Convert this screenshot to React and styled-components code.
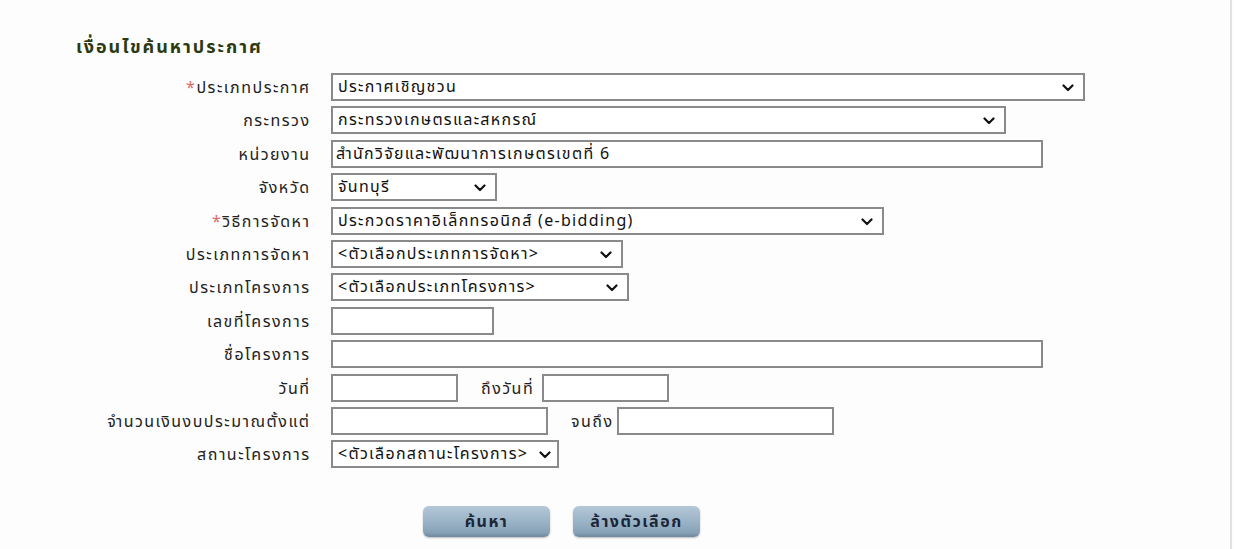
import React from "react";
import styled, { createGlobalStyle } from "styled-components";

const FONT = `Tahoma, "Noto Sans Thai", "Noto Sans", "DejaVu Sans", sans-serif`;

const GlobalStyle = createGlobalStyle`
  html, body {
    margin: 0;
    padding: 0;
    background: #fdfdfd;
  }
  body {
    font-family: ${FONT};
  }
`;

function App() {
  return (
    <>
      <GlobalStyle />
      <Page>
        <Title>เงื่อนไขค้นหาประกาศ</Title>
        <Form>
          <Label>
            <Star>*</Star>ประเภทประกาศ
          </Label>
          <Field>
            <Select width={754} value="ประกาศเชิญชวน" />
          </Field>

          <Label>กระทรวง</Label>
          <Field>
            <Select width={675} value="กระทรวงเกษตรและสหกรณ์" />
          </Field>

          <Label>หน่วยงาน</Label>
          <Field>
            <Input width={712} defaultValue="สำนักวิจัยและพัฒนาการเกษตรเขตที่ 6" />
          </Field>

          <Label>จังหวัด</Label>
          <Field>
            <Select width={166} value="จันทบุรี" />
          </Field>

          <Label>
            <Star>*</Star>วิธีการจัดหา
          </Label>
          <Field>
            <Select width={553} value="ประกวดราคาอิเล็กทรอนิกส์ (e-bidding)" />
          </Field>

          <Label>ประเภทการจัดหา</Label>
          <Field>
            <Select width={292} value="<ตัวเลือกประเภทการจัดหา>" />
          </Field>

          <Label>ประเภทโครงการ</Label>
          <Field>
            <Select width={298} value="<ตัวเลือกประเภทโครงการ>" />
          </Field>

          <Label>เลขที่โครงการ</Label>
          <Field>
            <Input width={163} />
          </Field>

          <Label>ชื่อโครงการ</Label>
          <Field>
            <Input width={712} />
          </Field>

          <Label>วันที่</Label>
          <Field>
            <Input width={127} />
            <InlineLabel $before={23} $after={8}>ถึงวันที่</InlineLabel>
            <Input width={127} />
          </Field>

          <Label>จำนวนเงินงบประมาณตั้งแต่</Label>
          <Field>
            <Input width={217} />
            <InlineLabel $before={23} $after={3}>จนถึง</InlineLabel>
            <Input width={217} />
          </Field>

          <Label>สถานะโครงการ</Label>
          <Field>
            <Select width={228} value="<ตัวเลือกสถานะโครงการ>" narrow />
          </Field>
        </Form>
        <Buttons>
          <Button>ค้นหา</Button>
          <Button>ล้างตัวเลือก</Button>
        </Buttons>
      </Page>
    </>
  );
}

function Select({ width, value, narrow }) {
  return (
    <SelectBox style={{ width }}>
      <SelectText>{value}</SelectText>
      <Chevron $narrow={narrow} viewBox="0 0 12 8" width="12" height="8">
        <path
          d="M1.5 1.5 L6 6 L10.5 1.5"
          fill="none"
          stroke="#111"
          strokeWidth="2.2"
          strokeLinecap="round"
          strokeLinejoin="round"
        />
      </Chevron>
    </SelectBox>
  );
}

export default App;

const Page = styled.div`
  width: 1232px;
  height: 549px;
  box-sizing: border-box;
  border-right: 2px solid #e2e2e2;
  padding-top: 35px;
  overflow: hidden;
`;

const Title = styled.div`
  padding-left: 76px;
  font-size: 18px;
  font-weight: bold;
  letter-spacing: 2px;
  color: #2c3a12;
  line-height: 26px;
  margin-bottom: 12px;
`;

const Form = styled.div`
  display: grid;
  grid-template-columns: 309px 1fr;
  column-gap: 22px;
  row-gap: 5.4px;
  align-items: center;
`;

const Label = styled.div`
  box-sizing: border-box;
  height: 28px;
  padding-top: 2px;
  text-align: right;
  font-size: 16px;
  letter-spacing: 1.5px;
  color: #222;
  white-space: nowrap;
  line-height: 26px;
  margin-right: -1.5px;
`;

const Star = styled.span`
  color: #e06a6a;
`;

const Field = styled.div`
  display: flex;
  align-items: center;
  height: 28px;
`;

const InlineLabel = styled.span`
  font-size: 16px;
  letter-spacing: 1.5px;
  color: #222;
  line-height: 26px;
  padding-top: 2px;
  margin-left: ${(p) => p.$before}px;
  margin-right: ${(p) => p.$after}px;
  white-space: nowrap;
`;

const boxStyles = `
  box-sizing: border-box;
  height: 28px;
  border: 2px solid #8a8a8a;
  background: #fff;
  font-family: ${FONT};
  font-size: 16px;
  letter-spacing: 1.3px;
  color: #111;
`;

const Input = styled.input.attrs((p) => ({ style: { width: p.width } }))`
  ${boxStyles}
  padding: 0 3px;
  outline: none;
`;

const SelectBox = styled.div`
  ${boxStyles}
  position: relative;
  display: flex;
  align-items: center;
  padding: 0 24px 0 5px;
`;

const SelectText = styled.span`
  white-space: nowrap;
  overflow: hidden;
`;

const Chevron = styled.svg`
  position: absolute;
  right: ${(p) => (p.$narrow ? 6 : 9)}px;
  top: 9px;
`;

const Buttons = styled.div`
  display: flex;
  gap: 23px;
  padding-left: 423px;
  margin-top: 38px;
`;

const Button = styled.button`
  width: 127px;
  height: 31px;
  border: none;
  border-radius: 6px;
  background: linear-gradient(to bottom, #b4c8d8 0%, #9bb3c7 50%, #87a2b8 85%, #6f879b 100%);
  box-shadow: 0 1px 2px rgba(0, 0, 0, 0.25);
  font-family: ${FONT};
  font-size: 16px;
  letter-spacing: 1.5px;
  font-weight: bold;
  color: #1b2636;
  cursor: pointer;
`;
